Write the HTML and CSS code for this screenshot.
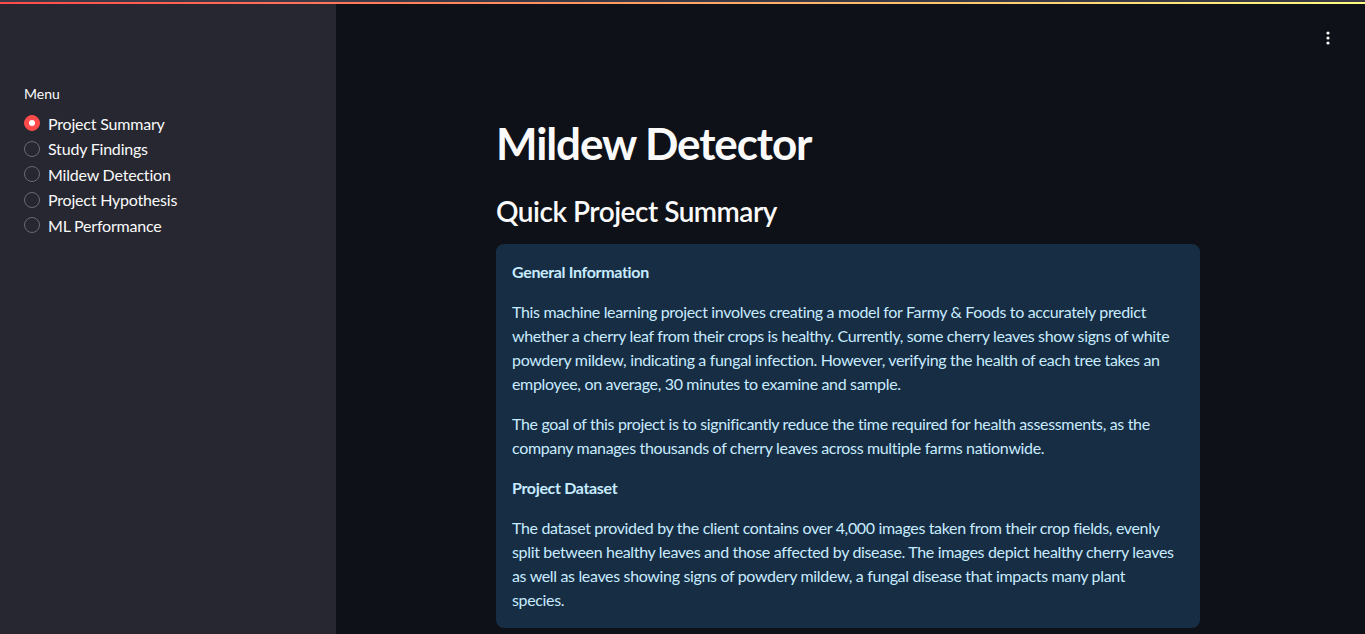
FILE: index.html
```html
<!DOCTYPE html>
<html lang="en">
<head>
<meta charset="utf-8">
<title>Mildew Detector</title>
<link rel="stylesheet" href="styles.css">
</head>
<body>
<div class="topline"></div>
<div class="app">
  <aside class="sidebar">
    <div class="menu-label">Menu</div>
    <div class="radio-group">
      <label class="radio selected"><span class="dot"></span><span>Project Summary</span></label>
      <label class="radio"><span class="dot"></span><span>Study Findings</span></label>
      <label class="radio"><span class="dot"></span><span>Mildew Detection</span></label>
      <label class="radio"><span class="dot"></span><span>Project Hypothesis</span></label>
      <label class="radio"><span class="dot"></span><span>ML Performance</span></label>
    </div>
  </aside>
  <main class="main">
    <div class="toolbar">
      <svg class="kebab" width="16" height="16" viewBox="0 0 16 16"><circle cx="8" cy="3" r="1.6" fill="#fafafa"/><circle cx="8" cy="8" r="1.6" fill="#fafafa"/><circle cx="8" cy="13" r="1.6" fill="#fafafa"/></svg>
    </div>
    <div class="block">
      <h1 class="title">Mildew Detector</h1>
      <h2 class="subtitle">Quick Project Summary</h2>
      <div class="info">
        <p><strong>General Information</strong></p>
        <p>This machine learning project involves creating a model for Farmy &amp; Foods to accurately predict whether a cherry leaf from their crops is healthy. Currently, some cherry leaves show signs of white powdery mildew, indicating a fungal infection. However, verifying the health of each tree takes an employee, on average, 30 minutes to examine and sample.</p>
        <p>The goal of this project is to significantly reduce the time required for health assessments, as the company manages thousands of cherry leaves across multiple farms nationwide.</p>
        <p><strong>Project Dataset</strong></p>
        <p>The dataset provided by the client contains over 4,000 images taken from their crop fields, evenly split between healthy leaves and those affected by disease. The images depict healthy cherry leaves as well as leaves showing signs of powdery mildew, a fungal disease that impacts many plant species.</p>
      </div>
    </div>
  </main>
</div>
</body>
</html>
```
FILE: styles.css
```css
* { box-sizing: border-box; }
html, body {
  margin: 0;
  height: 100%;
  overflow: hidden;
  background: #0e1117;
  font-family: Lato, "Noto Sans", sans-serif;
  color: #fafafa;
}
.topline {
  height: 4px;
  border-top: 2px solid #3a3946;
  background: linear-gradient(90deg, #ff4b4b, #fffd80);
}
.app {
  display: flex;
  height: calc(100% - 4px);
}
.sidebar {
  width: 336px;
  flex: none;
  background: #262730;
  padding: 81px 24px 0 24px;
}
.menu-label {
  font-size: 14px;
  line-height: 18px;
  margin-bottom: 8px;
}
.radio-group {
  display: flex;
  flex-direction: column;
  gap: 1.5px;
}
.radio {
  display: flex;
  align-items: center;
  height: 24px;
  font-size: 16px;
  letter-spacing: -0.2px;
  gap: 8px;
}
.dot {
  width: 16px;
  height: 16px;
  border-radius: 50%;
  border: 1px solid #686973;
  flex: none;
  display: flex;
  align-items: center;
  justify-content: center;
}
.radio.selected .dot {
  background: #ff4b4b;
  border-color: #ff4b4b;
}
.radio.selected .dot::after {
  content: "";
  width: 6px;
  height: 6px;
  border-radius: 50%;
  background: #fff;
}
.main {
  flex: 1;
  display: flex;
  flex-direction: column;
  align-items: center;
}
.toolbar {
  align-self: stretch;
  display: flex;
  justify-content: flex-end;
  padding: 26px 29px 0 0;
  height: 113px;
}
.block {
  width: 736px;
  padding: 0 16px;
  margin-left: -5px;
}
.title {
  font-size: 44px;
  font-weight: 700;
  line-height: 52px;
  letter-spacing: -1.1px;
  margin: 0 0 25px 0;
}
.subtitle {
  font-size: 28px;
  font-weight: 600;
  line-height: 34px;
  letter-spacing: -0.5px;
  margin: 0 0 16px 0;
}
.info {
  background: #172d43;
  color: #c7ebff;
  border-radius: 8px;
  padding: 16px 22px 16px 16px;
  font-size: 16px;
  line-height: 24px;
  letter-spacing: -0.34px;
}
.info p { margin: 0 0 16px 0; }
.info p:last-child { margin-bottom: 0; }
.info strong { font-weight: 700; }
```
